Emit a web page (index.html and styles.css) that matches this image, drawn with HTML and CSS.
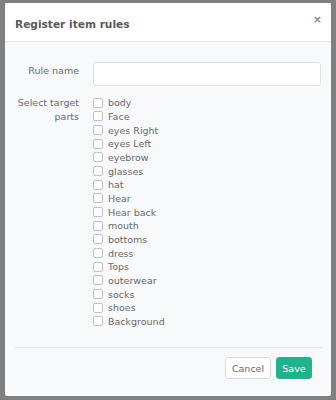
FILE: index.html
```html
<!DOCTYPE html>
<html>
<head>
<meta charset="utf-8">
<link rel="stylesheet" href="styles.css">
</head>
<body>
<div class="modal">
  <div class="header">
    <div class="title">Register item rules</div>
    <div class="close">×</div>
  </div>
  <div class="content">
    <div class="row">
      <div class="label label-input">Rule name</div>
      <input class="text-input" type="text">
    </div>
    <div class="row row-checks">
      <div class="label">Select target parts</div>
      <div class="checks">
        <label class="check"><input type="checkbox"><span>body</span></label>
        <label class="check"><input type="checkbox"><span>Face</span></label>
        <label class="check"><input type="checkbox"><span>eyes Right</span></label>
        <label class="check"><input type="checkbox"><span>eyes Left</span></label>
        <label class="check"><input type="checkbox"><span>eyebrow</span></label>
        <label class="check"><input type="checkbox"><span>glasses</span></label>
        <label class="check"><input type="checkbox"><span>hat</span></label>
        <label class="check"><input type="checkbox"><span>Hear</span></label>
        <label class="check"><input type="checkbox"><span>Hear back</span></label>
        <label class="check"><input type="checkbox"><span>mouth</span></label>
        <label class="check"><input type="checkbox"><span>bottoms</span></label>
        <label class="check"><input type="checkbox"><span>dress</span></label>
        <label class="check"><input type="checkbox"><span>Tops</span></label>
        <label class="check"><input type="checkbox"><span>outerwear</span></label>
        <label class="check"><input type="checkbox"><span>socks</span></label>
        <label class="check"><input type="checkbox"><span>shoes</span></label>
        <label class="check"><input type="checkbox"><span>Background</span></label>
      </div>
    </div>
  </div>
  <div class="footer">
    <button class="btn btn-cancel">Cancel</button>
    <button class="btn btn-save">Save</button>
  </div>
</div>
</body>
</html>
```
FILE: styles.css
```css
html, body {
  margin: 0;
  padding: 0;
}
body {
  width: 336px;
  height: 400px;
  background: #808080;
  font-family: "DejaVu Sans", sans-serif;
  overflow: hidden;
}
.modal {
  margin: 3px 5px 0 5px;
  width: 326px;
  height: 393px;
  background: #f8f9fb;
  border-radius: 2px;
  display: flex;
  flex-direction: column;
}
.header {
  height: 38px;
  flex: none;
  background: #ffffff;
  border-bottom: 1px solid #e4e6ea;
  border-radius: 2px 2px 0 0;
  display: flex;
  align-items: center;
  justify-content: space-between;
  padding: 0 9px 0 10px;
}
.title {
  font-size: 10.6px;
  font-weight: bold;
  color: #5b5b5b;
  padding-top: 3px;
}
.close {
  font-size: 11px;
  font-weight: bold;
  color: #8a8a8a;
  margin-top: -5px;
}
.content {
  flex: 1;
  padding: 20px 10px 0 10px;
}
.row {
  display: flex;
  gap: 14px;
}
.label {
  width: 64px;
  flex: none;
  text-align: right;
  font-size: 9.5px;
  line-height: 13.66px;
  color: #6a6d72;
}
.label-input {
  padding-top: 2px;
}
.text-input {
  flex: 1;
  height: 24px;
  box-sizing: border-box;
  margin: 0;
  border: 1px solid #dfe2e8;
  border-radius: 3px;
  background: #ffffff;
  outline: none;
}
.row-checks {
  margin-top: 10px;
}
.checks {
  display: flex;
  flex-direction: column;
}
.check {
  display: flex;
  align-items: center;
  height: 13.66px;
  gap: 5px;
  font-size: 9.5px;
  color: #6a6a6a;
}
.check input {
  appearance: none;
  -webkit-appearance: none;
  margin: 0;
  width: 10px;
  height: 10px;
  box-sizing: border-box;
  border: 1px solid #bfc3c8;
  border-radius: 2px;
  background: #ffffff;
}
.footer {
  flex: none;
  margin: 0 9px 0 10px;
  border-top: 1px solid #e4e6ea;
  padding: 9px 10px 17px 0;
  display: flex;
  justify-content: flex-end;
  gap: 5px;
}
.btn {
  height: 22px;
  border-radius: 3px;
  font-family: "DejaVu Sans", sans-serif;
  font-size: 9.5px;
  padding: 0;
  margin: 0;
}
.btn-cancel {
  width: 46px;
  background: #ffffff;
  border: 1px solid #d7dadf;
  color: #6a6a6a;
}
.btn-save {
  width: 36px;
  background: #21b28b;
  border: 1px solid #21b28b;
  color: #ffffff;
}
```
